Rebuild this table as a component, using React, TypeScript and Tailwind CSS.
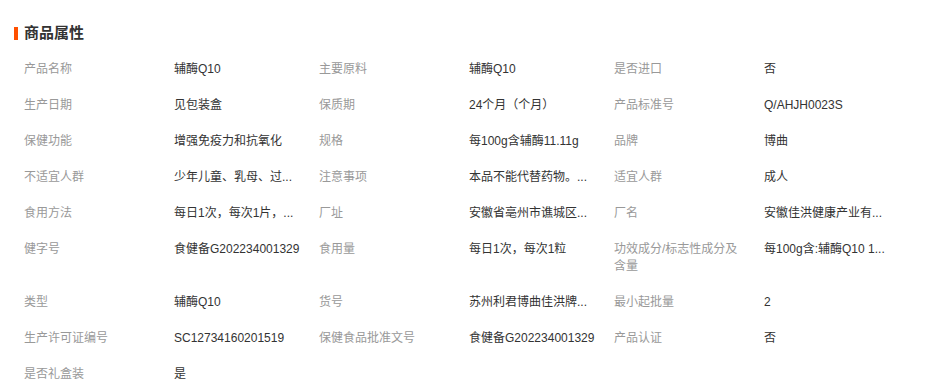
import React from "react";

const rows: [string, string][][] = [
  [["产品名称", "辅酶Q10"], ["主要原料", "辅酶Q10"], ["是否进口", "否"]],
  [["生产日期", "见包装盒"], ["保质期", "24个月（个月）"], ["产品标准号", "Q/AHJH0023S"]],
  [["保健功能", "增强免疫力和抗氧化"], ["规格", "每100g含辅酶11.11g"], ["品牌", "博曲"]],
  [["不适宜人群", "少年儿童、乳母、过..."], ["注意事项", "本品不能代替药物。..."], ["适宜人群", "成人"]],
  [["食用方法", "每日1次，每次1片，..."], ["厂址", "安徽省亳州市谯城区..."], ["厂名", "安徽佳洪健康产业有..."]],
  [["健字号", "食健备G202234001329"], ["食用量", "每日1次，每次1粒"], ["功效成分/标志性成分及含量", "每100g含:辅酶Q10 1..."]],
  [["类型", "辅酶Q10"], ["货号", "苏州利君博曲佳洪牌..."], ["最小起批量", "2"]],
  [["生产许可证编号", "SC12734160201519"], ["保健食品批准文号", "食健备G202234001329"], ["产品认证", "否"]],
  [["是否礼盒装", "是"]],
];

export default function App() {
  return (
    <div
      className="w-[948px] h-[390px] bg-white overflow-hidden"
      style={{ fontFamily: '"Liberation Sans", "Noto Sans CJK SC", sans-serif' }}
    >
      <div className="pt-[24px] pl-[14px] mb-[9px] flex items-center h-[42px]">
        <div className="w-[4px] h-[13px] bg-[#ff5000]" />
        <div className="ml-[6px] text-[15px] leading-[18px] font-bold text-[#333]">商品属性</div>
      </div>
      <div className="pl-[24px] grid grid-cols-[295px_295px_295px]">
        {rows.flat().map(([label, value], i) => (
          <div key={i} className="flex text-[12px] leading-[17px] pt-[10px] pb-[9px]">
            <div className="w-[150px] pr-[25px] text-[#999]">{label}</div>
            <div className="w-[145px] text-[#333] whitespace-nowrap">{value}</div>
          </div>
        ))}
      </div>
    </div>
  );
}
